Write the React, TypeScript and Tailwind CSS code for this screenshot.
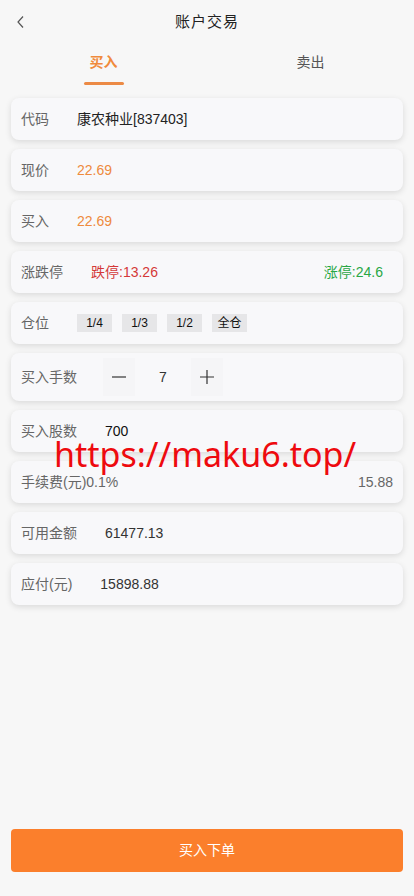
import React from "react";

const Card = ({ children, h = "h-[42px]" }: { children: React.ReactNode; h?: string }) => (
  <div className={`${h} mx-[11px] rounded-[8px] bg-[#f8f8fa] shadow-[0_2px_6px_rgba(0,0,0,0.12)] flex items-center px-[10px] text-[14px]`}>
    {children}
  </div>
);

const Label = ({ children }: { children: React.ReactNode }) => (
  <span className="text-[#666] mr-[28px] whitespace-nowrap">{children}</span>
);

export default function App() {
  return (
    <div
      className="relative min-h-screen flex flex-col bg-[#f7f7f7] text-[#333]"
      style={{ fontFamily: '"Liberation Sans", "Noto Sans CJK SC", sans-serif' }}
    >
      <div className="h-[42px] relative flex items-center justify-center">
        <svg className="absolute left-[16px] top-[15px]" width="10" height="14" viewBox="0 0 10 14" fill="none">
          <path d="M7 1.5 L2 7 L7 12.5" stroke="#555" strokeWidth="1.2" />
        </svg>
        <span className="text-[15px] text-[#222] tracking-[1px] mt-[2px]">账户交易</span>
      </div>
      <div className="h-[48px] flex">
        <div className="flex-1 flex flex-col items-center pt-[10px]">
          <span className="text-[14px] text-[#f08a3c] font-bold">买入</span>
          <div className="mt-[9px] w-[40px] h-[3px] bg-[#ec8a45] rounded-full" />
        </div>
        <div className="flex-1 flex flex-col items-center pt-[10px]">
          <span className="text-[14px] text-[#555]">卖出</span>
        </div>
      </div>
      <div className="flex flex-col gap-[9px] pt-[8px]">
        <Card>
          <Label>代码</Label>
          <span className="text-[#222]">康农种业[837403]</span>
        </Card>
        <Card>
          <Label>现价</Label>
          <span className="text-[#ee8a3d]">22.69</span>
        </Card>
        <Card>
          <Label>买入</Label>
          <span className="text-[#ee8a3d]">22.69</span>
        </Card>
        <Card>
          <Label>涨跌停</Label>
          <span className="text-[#d43838]">跌停:13.26</span>
          <span className="ml-auto mr-[10px] text-[#28a745]">涨停:24.6</span>
        </Card>
        <Card>
          <Label>仓位</Label>
          <div className="flex gap-[10px] text-[12px] text-[#111]">
            {["1/4", "1/3", "1/2", "全仓"].map((t) => (
              <span key={t} className="w-[35px] h-[18px] bg-[#e6e6e8] flex items-center justify-center">
                {t}
              </span>
            ))}
          </div>
        </Card>
        <Card h="h-[48px]">
          <Label>买入手数</Label>
          <div className="flex items-center h-[38px] bg-[#f5f5f7] -ml-[2px]">
            <span className="w-[32px] flex justify-center">
              <svg width="14" height="2" viewBox="0 0 14 2"><path d="M0 1 H14" stroke="#333" strokeWidth="1.2" /></svg>
            </span>
            <span className="w-[56px] h-full flex items-center justify-center bg-[#f8f8fa] text-[#333]">7</span>
            <span className="w-[32px] flex justify-center">
              <svg width="14" height="14" viewBox="0 0 14 14"><path d="M0 7 H14 M7 0 V14" stroke="#333" strokeWidth="1.2" /></svg>
            </span>
          </div>
        </Card>
        <Card>
          <Label>买入股数</Label>
          <span className="text-[#111]">700</span>
        </Card>
        <Card>
          <span className="text-[#666]">手续费(元)0.1%</span>
          <span className="ml-auto text-[#666]">15.88</span>
        </Card>
        <Card>
          <Label>可用金额</Label>
          <span className="text-[#333]">61477.13</span>
        </Card>
        <Card>
          <Label>应付(元)</Label>
          <span className="text-[#333]">15898.88</span>
        </Card>
      </div>
      <div className="mt-auto px-[11px] pb-[24px]">
        <div className="h-[43px] rounded-[4px] bg-[#fb7f2c] flex items-center justify-center text-white text-[14px]">
          买入下单
        </div>
      </div>
      <div
        className="absolute left-[54px] top-[434px] text-[34px] leading-[40px] text-[#ee0a0e] pointer-events-none whitespace-nowrap"
        style={{ fontFamily: '"Noto Sans", sans-serif' }}
      >
        https://maku6.top/
      </div>
    </div>
  );
}
